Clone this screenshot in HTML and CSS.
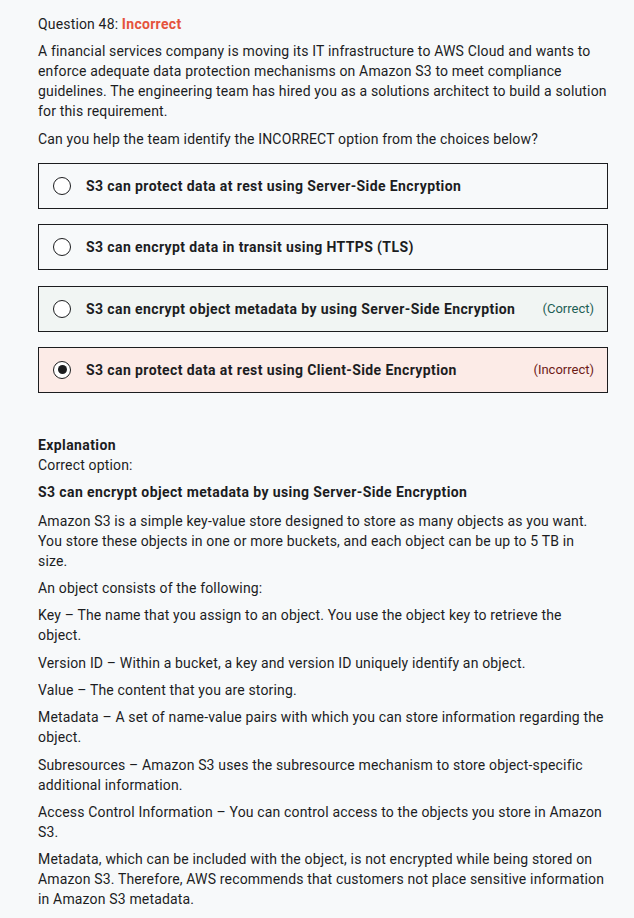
FILE: index.html
```html
<!DOCTYPE html>
<html lang="en">
<head>
<meta charset="utf-8">
<title>Question 48</title>
<link rel="stylesheet" href="styles.css">
</head>
<body>
<div class="page">
  <div class="question-title">Question 48: <span class="status-incorrect">Incorrect</span></div>
  <p>A financial services company is moving its IT infrastructure to AWS Cloud and wants to enforce adequate data protection mechanisms on Amazon S3 to meet compliance guidelines. The engineering team has hired you as a solutions architect to build a solution for this requirement.</p>
  <p>Can you help the team identify the INCORRECT option from the choices below?</p>

  <ul class="options">
    <li class="option">
      <span class="radio"></span>
      <span class="option-text">S3 can protect data at rest using Server-Side Encryption</span>
    </li>
    <li class="option">
      <span class="radio"></span>
      <span class="option-text">S3 can encrypt data in transit using HTTPS (TLS)</span>
    </li>
    <li class="option option-correct">
      <span class="radio"></span>
      <span class="option-text">S3 can encrypt object metadata by using Server-Side Encryption</span>
      <span class="tag tag-correct">(Correct)</span>
    </li>
    <li class="option option-incorrect">
      <span class="radio radio-checked"></span>
      <span class="option-text">S3 can protect data at rest using Client-Side Encryption</span>
      <span class="tag tag-incorrect">(Incorrect)</span>
    </li>
  </ul>

  <div class="explanation">
    <div class="explanation-title">Explanation</div>
    <div>Correct option:</div>
    <p class="answer-title">S3 can encrypt object metadata by using Server-Side Encryption</p>
    <p>Amazon S3 is a simple key-value store designed to store as many objects as you want. You store these objects in one or more buckets, and each object can be up to 5 TB in<br>size.</p>
    <p>An object consists of the following:</p>
    <p>Key – The name that you assign to an object. You use the object key to retrieve the object.</p>
    <p>Version ID – Within a bucket, a key and version ID uniquely identify an object.</p>
    <p>Value – The content that you are storing.</p>
    <p>Metadata – A set of name-value pairs with which you can store information regarding the object.</p>
    <p>Subresources – Amazon S3 uses the subresource mechanism to store object-specific additional information.</p>
    <p>Access Control Information – You can control access to the objects you store in Amazon S3.</p>
    <p>Metadata, which can be included with the object, is not encrypted while being stored on Amazon S3. Therefore, AWS recommends that customers not place sensitive information in Amazon S3 metadata.</p>
  </div>
</div>
</body>
</html>
```

FILE: styles.css
```css
html, body {
  margin: 0;
  padding: 0;
  background: #f7f9fa;
}

body {
  font-family: Roboto, "Liberation Sans", Arial, sans-serif;
  font-size: 14px;
  line-height: 20px;
  letter-spacing: 0.16px;
  color: #1c1d1f;
}

.page {
  padding: 14px 26px 20px 38px;
}

p {
  margin: 0 0 7.3px 0;
}

.question-title {
  margin-bottom: 7.3px;
}

.status-incorrect {
  color: #e5533d;
  font-weight: 700;
  letter-spacing: 0.3px;
}

.options {
  list-style: none;
  margin: 14.4px 0 0 0;
  padding: 0;
  display: flex;
  flex-direction: column;
  gap: 15.3px;
}

.option {
  box-sizing: border-box;
  height: 46px;
  border: 1px solid #1c1d1f;
  display: flex;
  align-items: center;
  padding: 0 13px 0 14px;
  font-weight: 700;
  letter-spacing: 0.4px;
}

.option-correct {
  background: #f1f5f3;
}

.option-incorrect {
  background: #fcebe7;
}

.radio {
  box-sizing: border-box;
  flex: 0 0 18px;
  width: 18px;
  height: 18px;
  border: 1.4px solid #1c1d1f;
  border-radius: 50%;
  background: #ffffff;
  margin-right: 15px;
  display: flex;
  align-items: center;
  justify-content: center;
}

.radio-checked::after {
  content: "";
  width: 9px;
  height: 9px;
  border-radius: 50%;
  background: #1c1d1f;
}

.option-text {
  flex: 1 1 auto;
}

.tag {
  font-weight: 400;
  font-size: 13px;
  letter-spacing: 0;
}

.tag-correct {
  color: #1e6055;
}

.tag-incorrect {
  color: #6d1a17;
}

.explanation {
  margin-top: 42px;
}

.explanation-title {
  font-weight: 700;
  letter-spacing: 0.4px;
}

.answer-title {
  font-weight: 700;
  letter-spacing: 0.4px;
  margin: 7px 0 9px 0;
}
```
